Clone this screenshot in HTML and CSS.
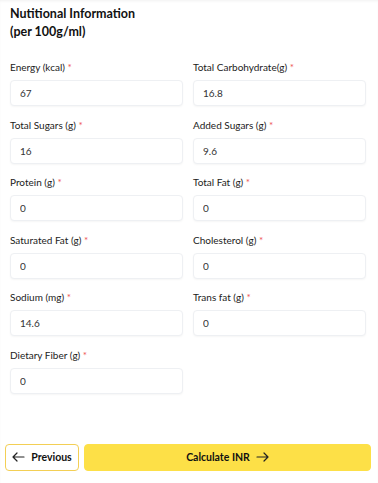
FILE: index.html
```html
<!DOCTYPE html>
<html lang="en">
<head>
  <meta charset="UTF-8" />
  <meta name="viewport" content="width=device-width, initial-scale=1.0" />
  <title>Nutritional Information</title>
  <link rel="stylesheet" href="styles.css">
</head>
<body>
  <div id="page">
    <h2 class="title">Nutitional Information<br>(per 100g/ml)</h2>
    <div class="grid">
      <div class="field"><label>Energy (kcal) <span class="req">*</span></label><input type="text" value="67" /></div>
      <div class="field"><label>Total Carbohydrate(g) <span class="req">*</span></label><input type="text" value="16.8" /></div>
      <div class="field"><label>Total Sugars (g) <span class="req">*</span></label><input type="text" value="16" /></div>
      <div class="field"><label>Added Sugars (g) <span class="req">*</span></label><input type="text" value="9.6" /></div>
      <div class="field"><label>Protein (g) <span class="req">*</span></label><input type="text" value="0" /></div>
      <div class="field"><label>Total Fat (g) <span class="req">*</span></label><input type="text" value="0" /></div>
      <div class="field"><label>Saturated Fat (g) <span class="req">*</span></label><input type="text" value="0" /></div>
      <div class="field"><label>Cholesterol (g) <span class="req">*</span></label><input type="text" value="0" /></div>
      <div class="field"><label>Sodium (mg) <span class="req">*</span></label><input type="text" value="14.6" /></div>
      <div class="field"><label>Trans fat (g) <span class="req">*</span></label><input type="text" value="0" /></div>
      <div class="field"><label>Dietary Fiber (g) <span class="req">*</span></label><input type="text" value="0" /></div>
    </div>
    <div class="actions">
      <button class="btn-prev">
        <svg width="13" height="10" viewBox="0 0 13 10" fill="none" stroke="#222" stroke-width="1.2" stroke-linecap="round" stroke-linejoin="round"><path d="M12 5H1M5 1L1 5l4 4"/></svg>
        Previous
      </button>
      <button class="btn-calc">
        Calculate INR
        <svg width="13" height="10" viewBox="0 0 13 10" fill="none" stroke="#222" stroke-width="1.2" stroke-linecap="round" stroke-linejoin="round"><path d="M1 5h11M8 1l4 4-4 4"/></svg>
      </button>
    </div>
  </div>
</body>
</html>
```

FILE: styles.css
```css
* { box-sizing: border-box; }
body {
  margin: 0;
  font-family: Lato, sans-serif;
  background: #fff;
  color: #222;
}
#page {
  padding: 5px 7px 0 5px;
  box-shadow: inset 0 2px 3px -1px rgba(0,0,0,0.06);
  min-height: 483px;
}
.title {
  margin: 0 0 19px 5px;
  font-size: 12.5px; line-height: 18px; font-weight: 700;
  color: #111;
}
.grid {
  display: grid; grid-template-columns: 173px 173px;
  column-gap: 10px; row-gap: 11.5px;
  padding-left: 5px;
}
.field { display: flex; flex-direction: column; }
.field label {
  font-size: 10px; line-height: 14px; height: 14px;
  margin-bottom: 6px; color: #222;
}
.req { color: #e55; }
.field input {
  height: 26px; width: 173px;
  border: 1px solid #eef0f3; border-radius: 4px;
  box-shadow: 0 1px 2px rgba(0,0,0,0.04);
  padding: 0 9px; font-family: inherit;
  font-size: 10px; color: #333; outline: none;
}
.actions {
  display: flex; gap: 5px;
  margin-top: 50px;
}
.actions button {
  height: 27px; border-radius: 4px; cursor: pointer;
  font-family: inherit; font-size: 10.5px; font-weight: 700; color: #111;
  display: flex; align-items: center; justify-content: center; gap: 6px;
}
.btn-prev {
  width: 74px; background: #fff;
  border: 1px solid #f3cf55;
}
.btn-calc {
  flex: 1; background: #fde047;
  border: 1px solid #fde047;
}
```
